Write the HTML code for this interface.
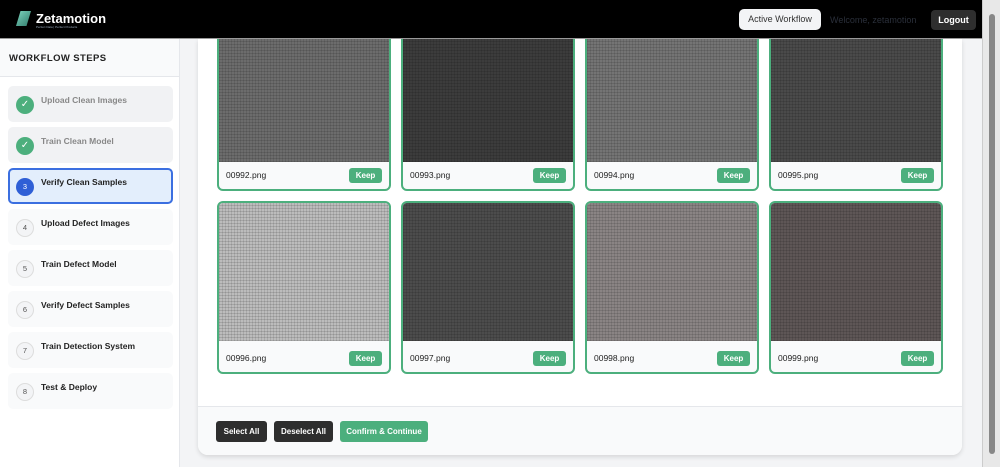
<!DOCTYPE html>
<html><head><style>
*{box-sizing:border-box;margin:0;padding:0}
body{width:1000px;height:467px;overflow:hidden;background:#f3f4f6;font-family:"Liberation Sans",sans-serif;position:relative}
.hdr{position:absolute;left:0;top:0;width:1000px;height:39px;background:#000;border-bottom:1px solid #999;z-index:5}
.logo{position:absolute;left:16px;top:11px;width:15px;height:15px;background:linear-gradient(135deg,#7fd6c0,#2f7a6a);clip-path:polygon(30% 0,100% 0,70% 100%,0 100%)}
.lt{position:absolute;left:36px;top:11px;color:#fff;font-size:13px;font-weight:bold}
.ls{position:absolute;left:36px;top:25px;color:#9ab;font-size:3px}
.aw{position:absolute;left:739px;top:9px;width:82px;height:21px;background:#f3f4f6;border-radius:5px;font-size:9px;color:#333;text-align:center;line-height:21px}
.wel{position:absolute;left:830px;top:15px;font-size:9px;color:#2a2f3a}
.lo{position:absolute;left:931px;top:10px;width:45px;height:20px;background:#2e2e2e;border-radius:4px;color:#fff;font-size:9px;font-weight:bold;text-align:center;line-height:20px}
.sb{position:absolute;left:982px;top:0;width:18px;height:467px;background:#e8e8e8;border-left:1px solid #ccc;z-index:6}
.sb i{position:absolute;left:6px;top:14px;width:6px;height:440px;background:#888;border-radius:3px}
.side{position:absolute;left:0;top:39px;width:180px;height:428px;background:#fff;border-right:1px solid #e5e7eb}
.sh{height:38px;background:#f9fafb;border-bottom:1px solid #e5e7eb;font-size:9.5px;font-weight:bold;letter-spacing:.4px;color:#222;padding:14px 9px}
.it{position:absolute;left:8px;width:165px;height:36px;background:#f9fafb;border-radius:5px}
.it .c{position:absolute;left:8px;top:10px;width:18px;height:18px;border-radius:50%;background:#f3f4f6;border:1px solid #ddd;font-size:7.5px;color:#555;text-align:center;line-height:16px}
.it .t{position:absolute;left:33px;top:9px;font-size:8.5px;font-weight:bold;color:#222}
.it.done{background:#f1f2f4}.it.done .t{color:#888}
.it.done .c{background:#4caf7d;border:none;color:#fff;font-size:10px;line-height:18px}
.it.act{background:#e3eefc;border:2px solid #3b6fe0}
.it.act .c{background:#2f5fd6;border:none;color:#fff;left:6px;top:8px;line-height:18px}
.it.act .t{left:31px;top:7px}
.card{position:absolute;left:198px;top:39px;width:764px;height:416px;background:#fff;border-radius:0 0 10px 10px;box-shadow:0 2px 5px rgba(0,0,0,.12)}
.foot{position:absolute;left:0;top:367px;width:764px;height:49px;background:#f9fafb;border-top:1px solid #e5e7eb;border-radius:0 0 10px 10px}
.b{position:absolute;top:14px;height:21px;border-radius:3px;color:#fff;font-size:8px;font-weight:bold;text-align:center;line-height:21px}
.im{position:absolute;width:174px;border:2px solid #4caf7d;border-radius:6px;background:#f9fafb;overflow:hidden}
.im .p{position:absolute;left:0;top:0;width:170px}
.im .n{position:absolute;left:7px;bottom:9px;font-size:8.5px;color:#222}
.im .k{position:absolute;right:7px;bottom:6px;width:33px;height:15px;background:#4caf7d;border-radius:3px;color:#fff;font-size:8px;font-weight:bold;text-align:center;line-height:15px}
</style></head><body>
<div class="hdr"><div class="logo"></div><div class="lt">Zetamotion</div><div class="ls">Perfect Data | Perfect Products</div>
<div class="aw">Active Workflow</div><div class="wel">Welcome, zetamotion</div><div class="lo">Logout</div></div>
<div class="side"><div class="sh">WORKFLOW STEPS</div></div>
<div class="it done" style="top:86px"><div class="c">✓</div><div class="t">Upload Clean Images</div></div>
<div class="it done" style="top:127px"><div class="c">✓</div><div class="t">Train Clean Model</div></div>
<div class="it act" style="top:168px"><div class="c">3</div><div class="t">Verify Clean Samples</div></div>
<div class="it" style="top:209px"><div class="c">4</div><div class="t">Upload Defect Images</div></div>
<div class="it" style="top:250px"><div class="c">5</div><div class="t">Train Defect Model</div></div>
<div class="it" style="top:291px"><div class="c">6</div><div class="t">Verify Defect Samples</div></div>
<div class="it" style="top:332px"><div class="c">7</div><div class="t">Train Detection System</div></div>
<div class="it" style="top:373px"><div class="c">8</div><div class="t">Test &amp; Deploy</div></div>
<div class="card">
<div class="foot">
<div class="b" style="left:18px;width:51px;background:#2e2e2e">Select All</div>
<div class="b" style="left:76px;width:59px;background:#2e2e2e">Deselect All</div>
<div class="b" style="left:142px;width:88px;background:#4caf7d">Confirm &amp; Continue</div>
</div>
</div>
<div id="g"></div>
<script>
(function(){
var cols=[217,401,585,769],names=['00992','00993','00994','00995','00996','00997','00998','00999'],
c=['#6c6c6c','#3c3c3c','#747474','#4a4a4a','#bcbcbc','#4c4c4c','#8a8484','#5e5656'];
var h='';
for(var i=0;i<8;i++){var r=i>>2,x=cols[i%4],ty=r?201:20,ht=r?173:171,ph=r?138:140;
var col=c[i];
h+='<div class="im" style="left:'+x+'px;top:'+ty+'px;height:'+ht+'px"><div class="p" style="height:'+ph+'px;background:repeating-linear-gradient(0deg,rgba(0,0,0,.12) 0 1px,transparent 1px 3px),repeating-linear-gradient(90deg,rgba(0,0,0,.1) 0 1px,transparent 1px 3px),'+col+'"></div><div class="n">'+names[i]+'.png</div><div class="k">Keep</div></div>';}
document.getElementById('g').innerHTML=h;
})();
</script>
<div class="sb"><i></i></div>
</body></html>
